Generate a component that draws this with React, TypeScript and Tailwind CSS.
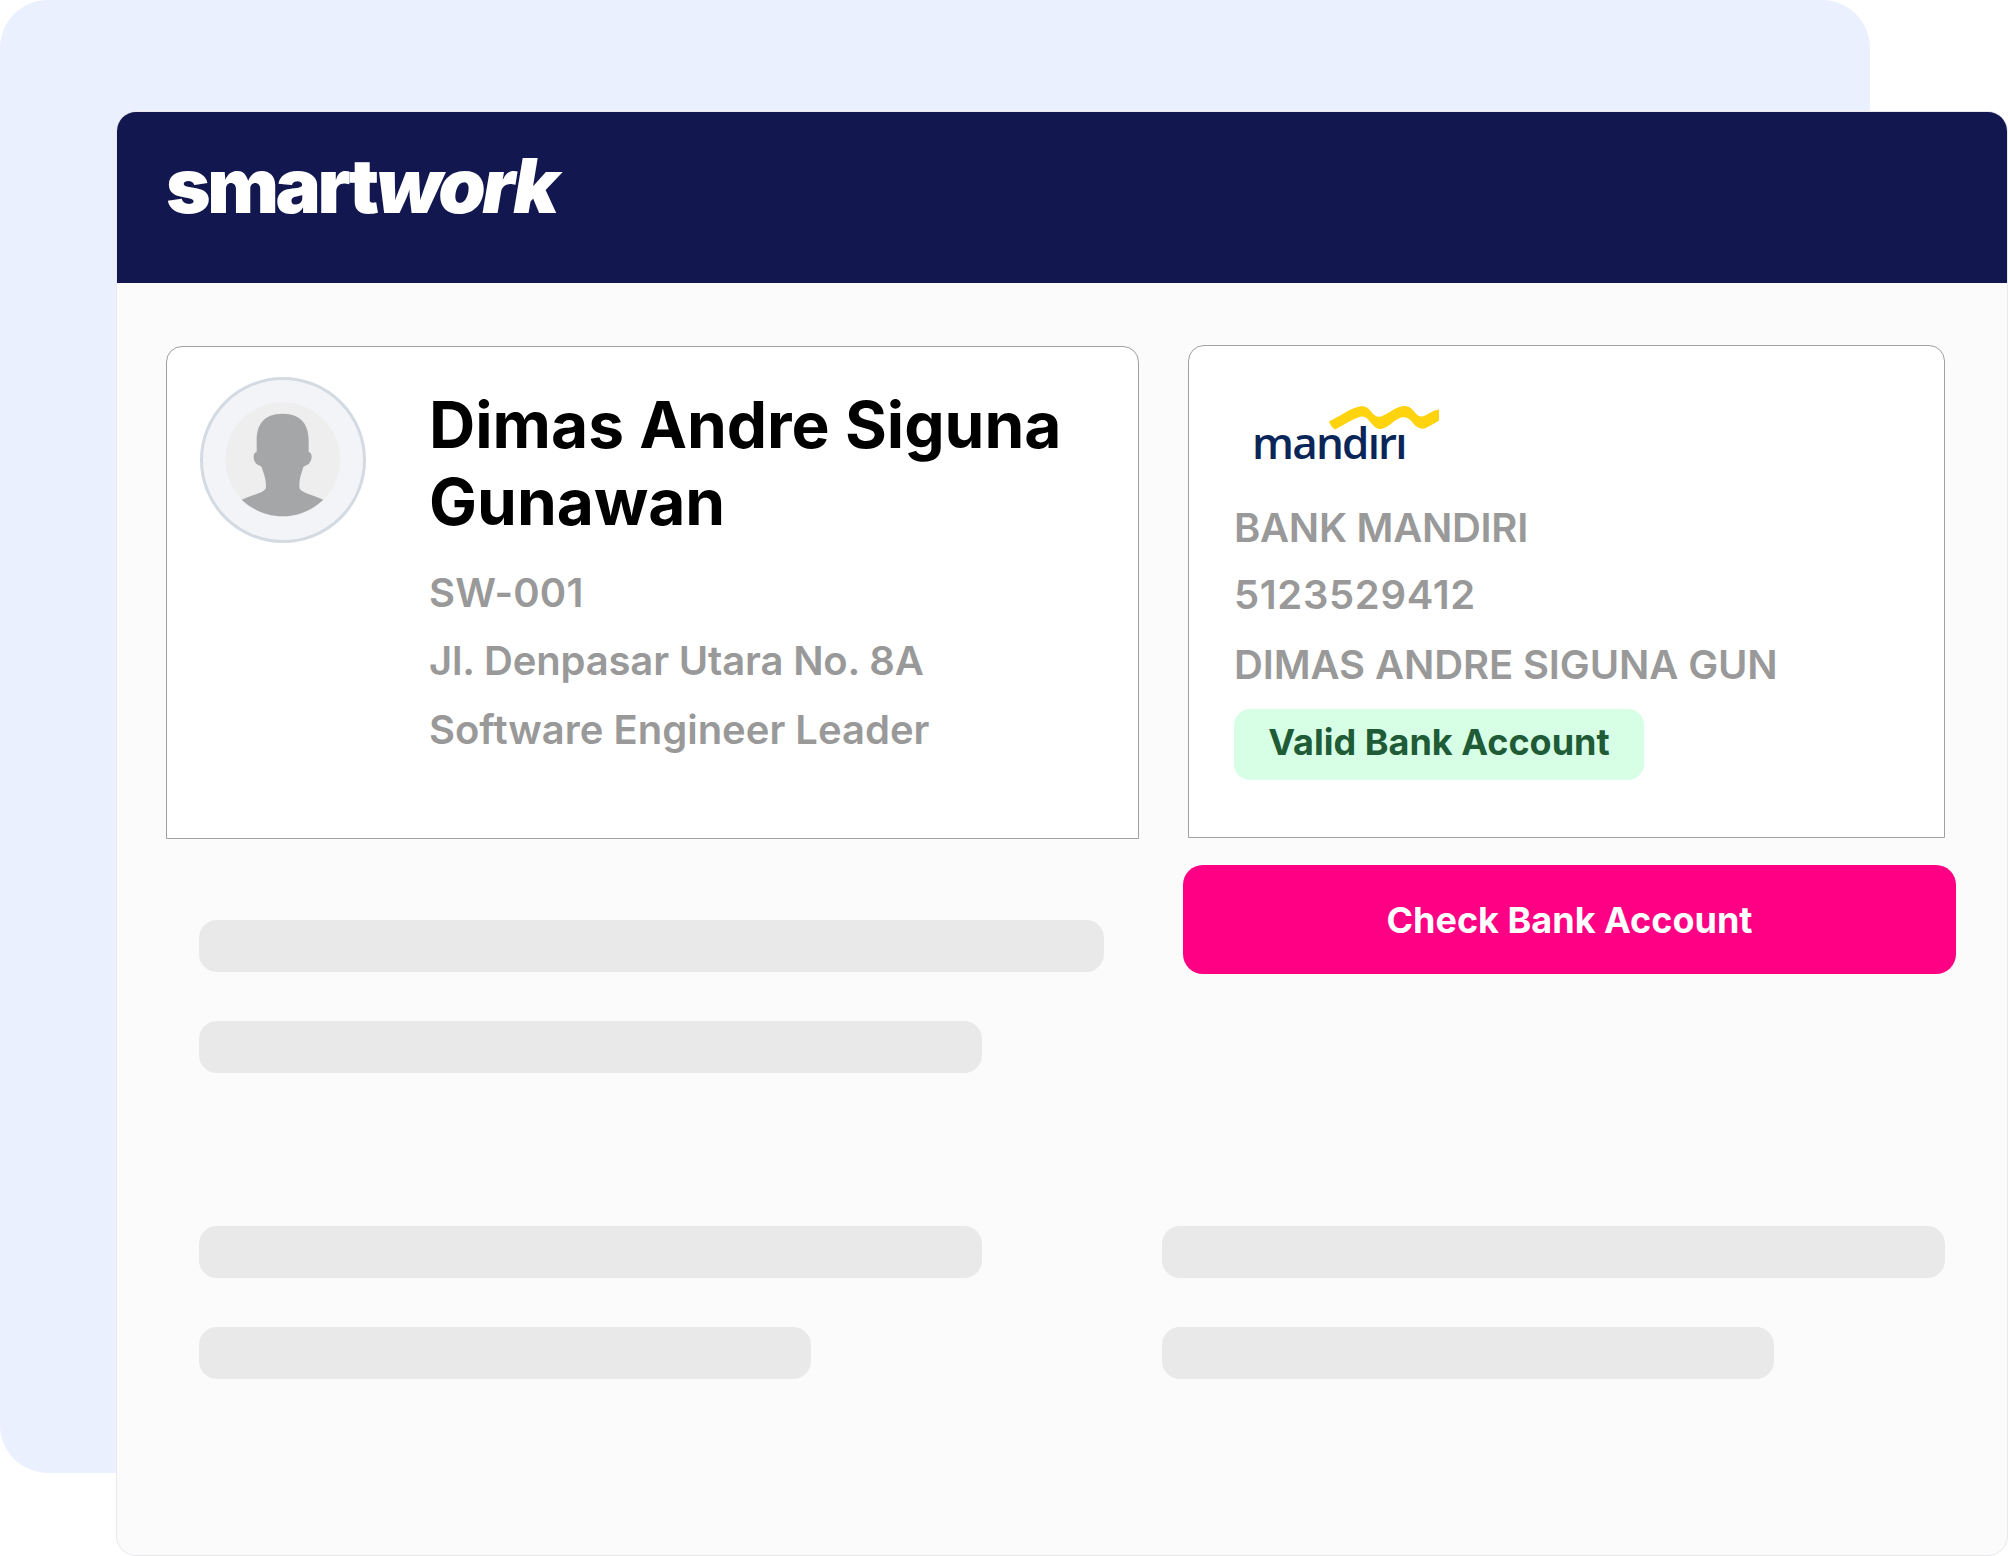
const inter = "font-['Inter',sans-serif]";

function Bar({ width }: { width: string }) {
  return <div className={`h-[52px] rounded-[18px] bg-[#e9e9e9] ${width}`} />;
}

function Avatar() {
  return (
    <div className="flex h-[166px] w-[166px] shrink-0 items-center justify-center rounded-full border-[3px] border-[#d3dae2] bg-[#f2f4f8]">
      <svg viewBox="120 140 498 498" className="h-[166px] w-[166px] shrink-0">
        <circle cx="368" cy="388" r="172" fill="#eeeeee" />
        <path
          fill="#a4a6a8"
          d="M368 250C310 250 290 285 290 330L290 365C280 365 278 385 285 395C290 405 300 405 305 410C310 430 318 440 318 470C318 485 290 490 245 508C280 540 320 558 368 558C415 558 455 540 490 508C445 490 418 485 418 470C418 440 425 430 430 410C436 405 446 405 450 395C458 385 456 365 446 365L446 330C446 285 425 250 368 250Z"
        />
      </svg>
    </div>
  );
}

function MandiriLogo() {
  return (
    <div className="relative h-[60px] w-[190px]">
      <svg viewBox="0 0 110 24" className="absolute left-[95px] top-0 h-[25px] w-[110px]">
        <path
          fill="#ffd30e"
          d="M0 16C10 11 20 4 27 2C35 -1 39 2 42 6C45 10 48 12 52 11C58 9 66 2 72 1C79 -1 83 3 86 7C89 11 92 12 96 10C100 8 106 4 110 4L110 15C105 18 99 22 95 23C89 24 85 19 82 15C79 12 76 11 72 12C66 14 60 21 54 23C48 25 44 20 40 15C37 11 33 10 29 12C21 15 12 21 6 24C3 22 1 19 0 16Z"
        />
      </svg>
      <span className="absolute left-[18px] top-[7px] font-['Open_Sans',sans-serif] text-[44px] leading-[60px] font-semibold tracking-[-1.8px] text-[#0a2558]">
        mandırı
      </span>
    </div>
  );
}

export default function App() {
  return (
    <div className={`relative h-[1556px] w-[2008px] overflow-hidden bg-white ${inter}`}>
      {/* back panel */}
      <div className="absolute left-0 top-0 h-[1473px] w-[1870px] rounded-[48px] bg-[#ebf0ff]" />

      <div className="relative ml-[116px] flex h-[1445px] w-[1892px] translate-y-[111px] flex-col overflow-hidden rounded-[20px] border border-[#e8e8ee] bg-[#fbfbfb]">
        {/* header */}
        <div className="flex h-[171px] shrink-0 items-start bg-[#12184f] pl-[49px] pt-[33px]">
          <span className="text-[76px] leading-[80px] font-black tracking-[-3.4px] text-white">
            smart<span className="italic">work</span>
          </span>
        </div>

        <div className="flex gap-[49px] pl-[49px] pt-[63px]">
          {/* left column */}
          <div className="flex w-[973px] flex-col">
            <div className="flex h-[493px] items-start gap-[63px] rounded-t-2xl border border-[#a0a0a0] bg-white pl-[33px] pt-[30px]">
              <Avatar />
              <div className="pt-[9px]">
                <div className="w-[680px] text-[64px] leading-[77px] font-bold text-black">
                  Dimas Andre Siguna Gunawan
                </div>
                <div className="mt-[19px] flex flex-col text-[40px] leading-[68px] font-semibold text-[#999999]">
                  <span className="tracking-[0.2px]">SW-001</span>
                  <span className="tracking-[-0.16px]">Jl. Denpasar Utara No. 8A</span>
                  <span className="mt-px">Software Engineer Leader</span>
                </div>
              </div>
            </div>
            <div className="ml-[33px] mt-[81px] flex flex-col gap-[49px]">
              <Bar width="w-[905px]" />
              <Bar width="w-[783px]" />
            </div>
          </div>

          {/* right column */}
          <div className="-mt-px flex w-[757px] flex-col">
            <div className="flex h-[493px] flex-col items-start rounded-t-2xl border border-[#a0a0a0] bg-white pl-[45px] pt-[59px]">
              <MandiriLogo />
              <div className="mt-[29px] flex flex-col text-[40px] leading-[68px] font-semibold whitespace-nowrap text-[#999999]">
                <span className="tracking-[-0.3px]">BANK MANDIRI</span>
                <span className="-mt-px tracking-[0.65px]">5123529412</span>
                <span className="mt-[2px] tracking-[-0.12px]">DIMAS ANDRE SIGUNA GUN</span>
              </div>
              <div className="mt-[10px] flex h-[71px] w-[410px] items-center justify-center rounded-2xl bg-[#d6ffe5] pb-[5px] text-[36px] font-bold text-[#1e5b36]">
                Valid Bank Account
              </div>
            </div>
            <button className="-ml-[5px] mt-[27px] flex h-[109px] w-[773px] items-center justify-center rounded-[20px] bg-[#ff0084] pt-px text-[36px] font-bold text-white">
              Check Bank Account
            </button>
          </div>
        </div>

        {/* lower placeholder rows */}
        <div className="ml-[82px] mt-[153px] flex gap-[180px]">
          <div className="flex flex-col gap-[49px]">
            <Bar width="w-[783px]" />
            <Bar width="w-[612px]" />
          </div>
          <div className="flex flex-col gap-[49px]">
            <Bar width="w-[783px]" />
            <Bar width="w-[612px]" />
          </div>
        </div>
      </div>
    </div>
  );
}
